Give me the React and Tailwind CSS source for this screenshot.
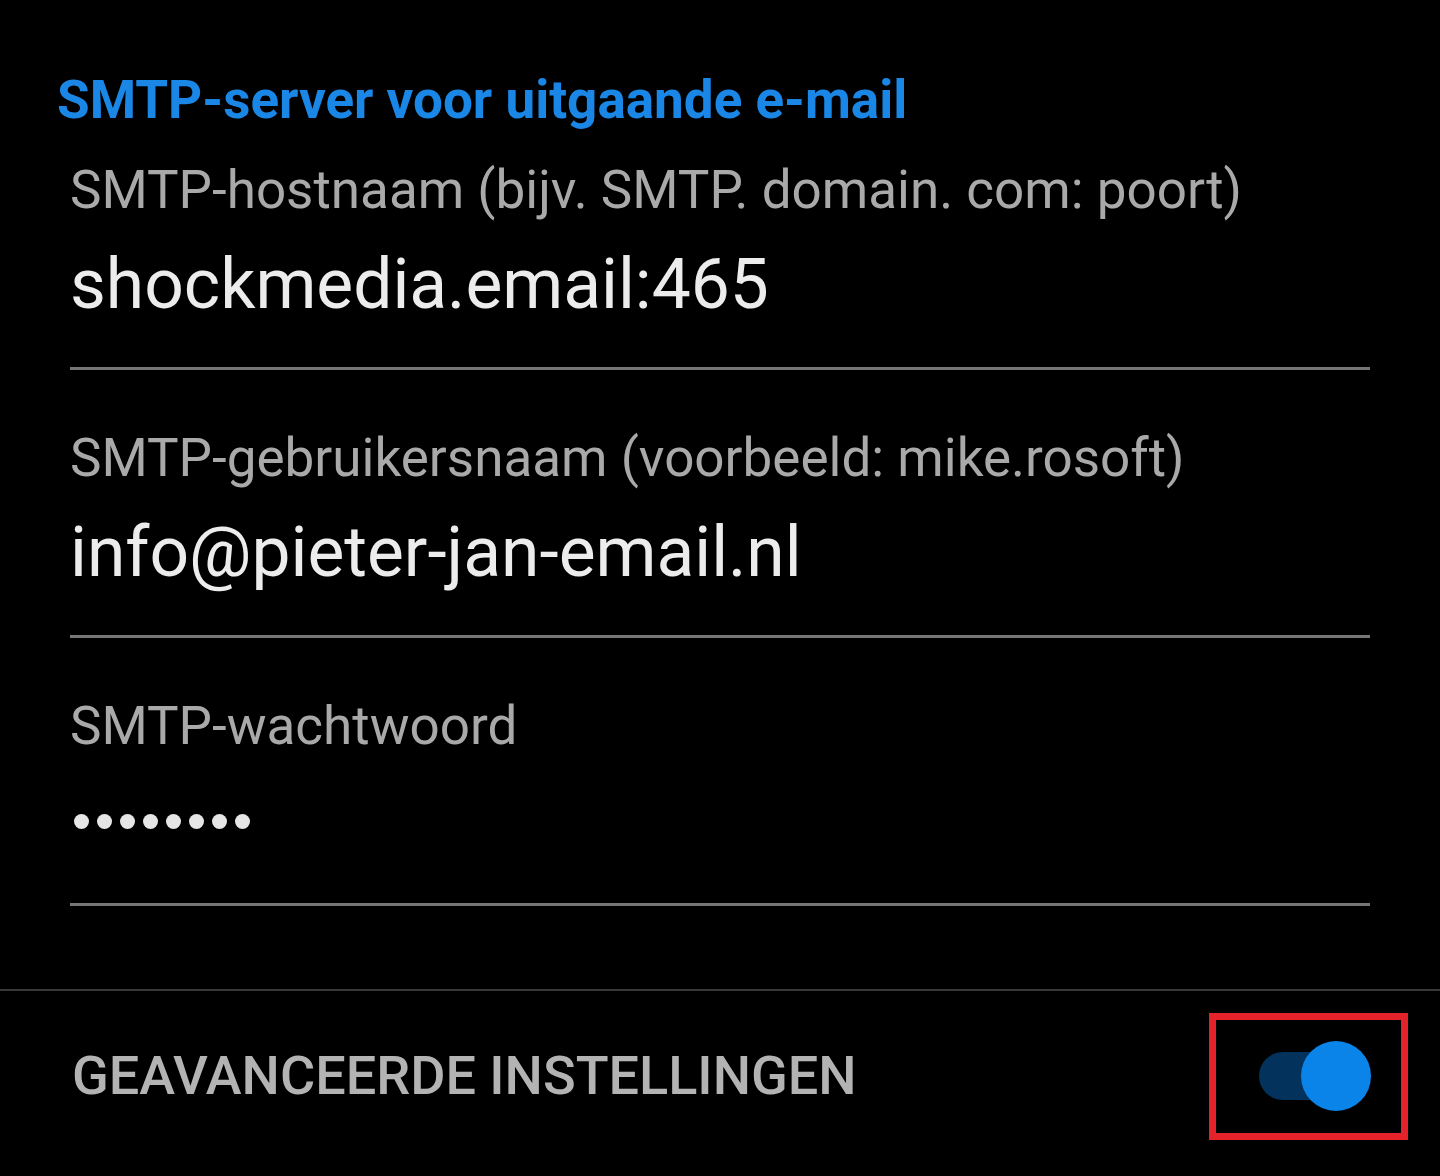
import React from 'react';

const fields = [
  { label: 'SMTP-hostnaam (bijv. SMTP. domain. com: poort)', value: 'shockmedia.email:465' },
  { label: 'SMTP-gebruikersnaam (voorbeeld: mike.rosoft)', value: 'info@pieter-jan-email.nl' },
  { label: 'SMTP-wachtwoord', value: null },
];

function Field({ label, value }) {
  return (
    <div className="pl-[70px] pr-[70px]">
      <div className="text-[53px] leading-[60px] text-[#a9a9a9] whitespace-nowrap">{label}</div>
      <div className="mt-[25px] h-[80px] flex items-center">
        {value ? (
          <span className="text-[69.5px] leading-[80px] text-[#ececec] whitespace-nowrap">{value}</span>
        ) : (
          <span className="flex gap-[8px] pl-[4px]" aria-label="wachtwoord">
            {Array.from({ length: 8 }).map((_, i) => (
              <span key={i} className="block w-[15px] h-[15px] rounded-full bg-[#e6e6e6]" />
            ))}
          </span>
        )}
      </div>
      <div className="mt-[42px] h-[3px] bg-[#767676]" />
    </div>
  );
}

export default function App() {
  return (
    <div className="w-[1440px] h-[1176px] bg-black overflow-hidden" style={{ fontFamily: 'Roboto, "Noto Sans", sans-serif' }}>
      <div className="pt-[68px]">
        <h2 className="pl-[57px] text-[53px] leading-[64px] font-bold text-[#1a87e7] whitespace-nowrap">
          SMTP-server voor uitgaande e-mail
        </h2>
        <div className="mt-[28px] flex flex-col gap-[58px]">
          {fields.map((f) => (
            <Field key={f.label} label={f.label} value={f.value} />
          ))}
        </div>
      </div>
      <div className="mt-[83px] h-[2px] bg-[#383838]" />
      <div className="h-[170px] flex items-center justify-between pl-[72px] pr-[32px]">
        <span className="text-[54px] leading-[60px] font-medium text-[#b3b3b3] whitespace-nowrap">
          GEAVANCEERDE INSTELLINGEN
        </span>
        <div className="w-[199px] h-[127px] border-[7px] border-[#e3222a] flex items-center pl-[43px]">
          <div className="relative w-[112px] h-[70px]">
            <div className="absolute left-0 top-[11px] w-[92px] h-[48px] rounded-full bg-[#03325c]" />
            <div className="absolute right-0 top-0 w-[70px] h-[70px] rounded-full bg-[#0a84e8]" />
          </div>
        </div>
      </div>
    </div>
  );
}
